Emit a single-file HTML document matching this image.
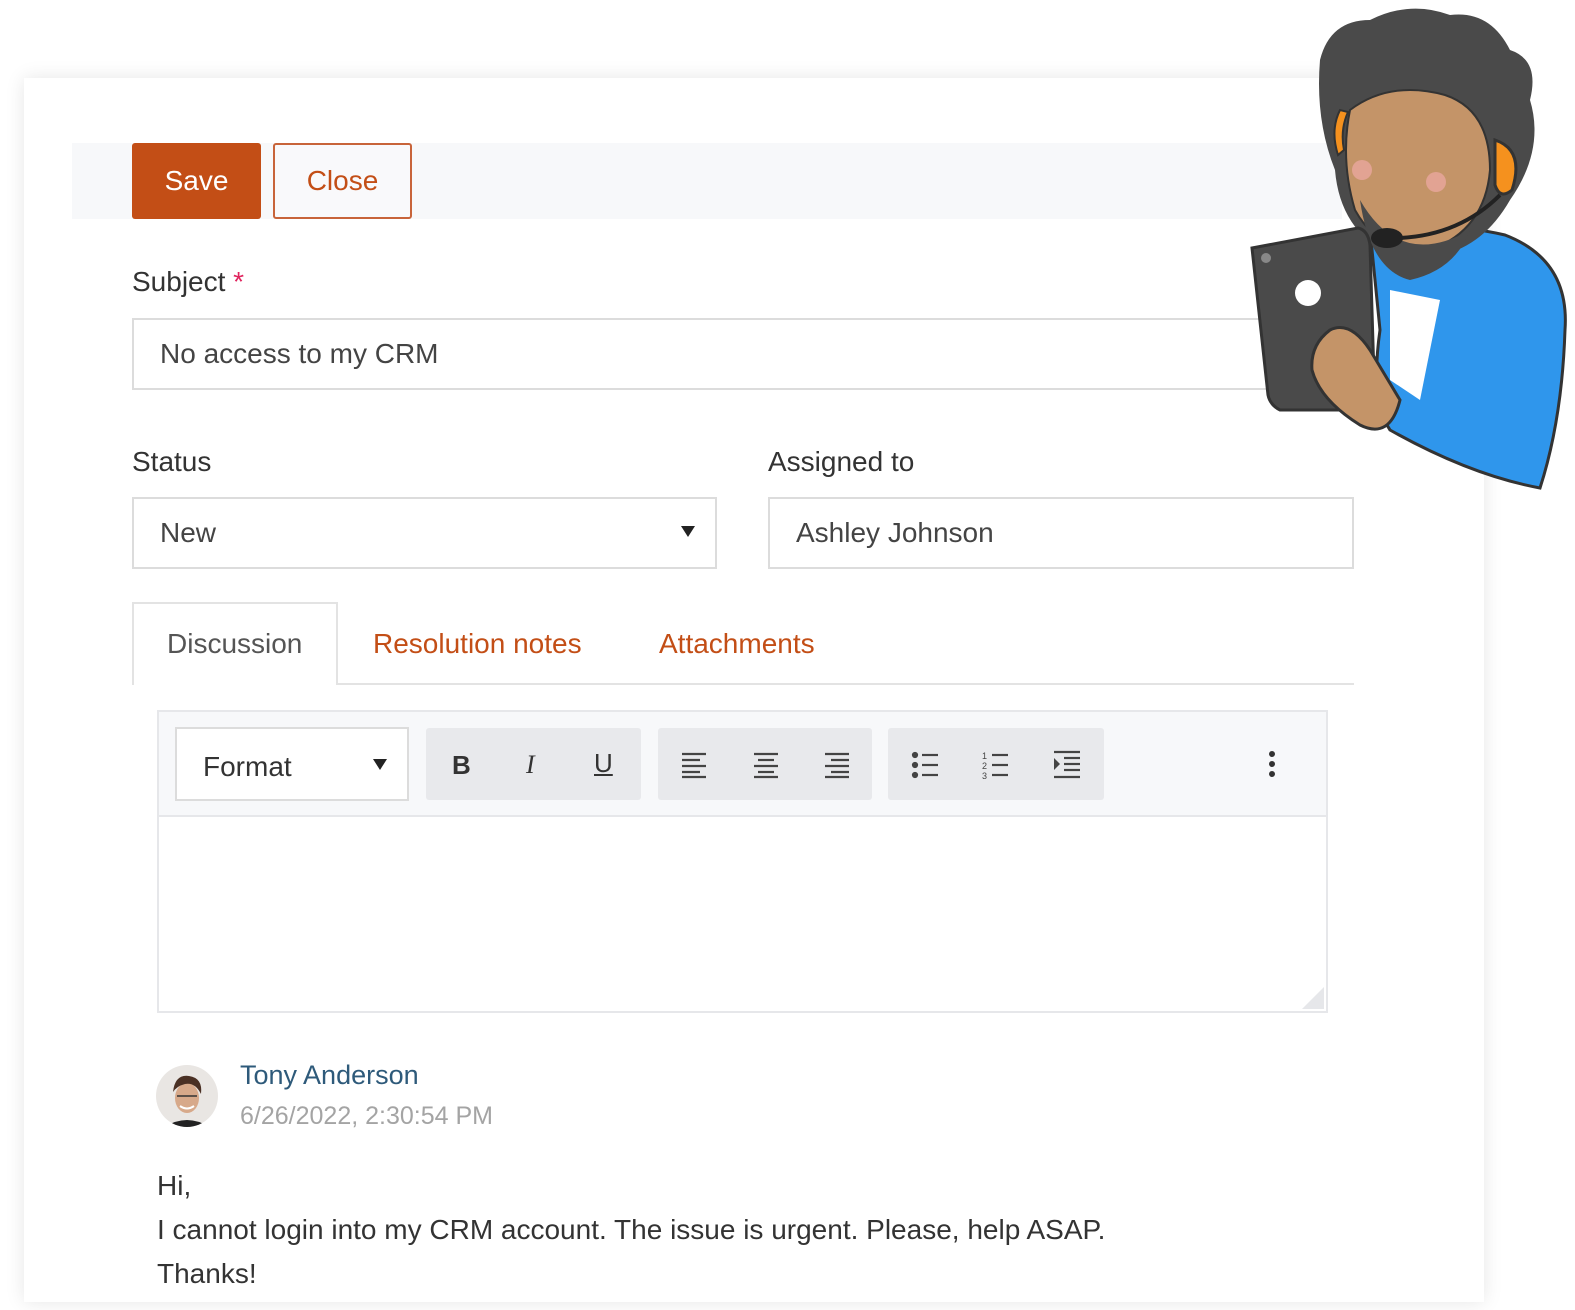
<!DOCTYPE html>
<html><head><meta charset="utf-8">
<style>
*{box-sizing:border-box;margin:0;padding:0}
html,body{width:1575px;height:1310px;overflow:hidden}
body{background:#fff;position:relative;font-family:"Liberation Sans",sans-serif;color:#333}
.card{position:absolute;left:24px;top:78px;width:1460px;height:1224px;background:#fff;box-shadow:0 0 18px rgba(0,0,0,0.10)}
.band{position:absolute;left:72px;top:143px;width:1270px;height:76px;background:#f7f8fa}
.btn{position:absolute;top:143px;height:76px;font-size:28px;display:flex;align-items:center;justify-content:center;border-radius:3px}
.save{left:132px;width:129px;background:#c34e16;color:#fff}
.close{left:273px;width:139px;border:2px solid #c8643a;color:#c34e16;background:#f9f9fb}
.lbl{position:absolute;font-size:28px;color:#333}
.inp{position:absolute;height:72px;border:2px solid #dcdcdc;font-size:28px;color:#444;padding-left:26px;display:flex;align-items:center;background:#fff}
.tab{position:absolute;font-size:28px;top:628px}
.tb{position:absolute;background:#e8e9ec;border-radius:3px;top:728px;height:72px}
</style></head><body>
<div class="card"></div>
<div class="band"></div>
<div class="btn save">Save</div>
<div class="btn close">Close</div>

<div class="lbl" style="left:132px;top:266px">Subject <span style="color:#e0245e">*</span></div>
<div class="inp" style="left:132px;top:318px;width:1222px">No access to my CRM</div>

<div class="lbl" style="left:132px;top:446px">Status</div>
<div class="inp" style="left:132px;top:497px;width:585px">New</div>
<div style="position:absolute;left:681px;top:526px;width:0;height:0;border-left:7px solid transparent;border-right:7px solid transparent;border-top:11px solid #222"></div>
<div class="lbl" style="left:768px;top:446px">Assigned to</div>
<div class="inp" style="left:768px;top:497px;width:586px">Ashley Johnson</div>

<div style="position:absolute;left:132px;top:683px;width:1222px;height:2px;background:#e3e3e3"></div>
<div style="position:absolute;left:132px;top:602px;width:206px;height:83px;border:2px solid #e3e3e3;border-bottom:none;background:#fff"></div>
<div class="tab" style="left:167px;color:#555">Discussion</div>
<div class="tab" style="left:373px;color:#c34e16">Resolution notes</div>
<div class="tab" style="left:659px;color:#c34e16">Attachments</div>

<div style="position:absolute;left:157px;top:710px;width:1171px;height:303px;border:2px solid #e6e7ea;background:#fff"></div>
<div style="position:absolute;left:159px;top:712px;width:1167px;height:105px;background:#f7f8fa;border-bottom:2px solid #e6e7ea"></div>
<div style="position:absolute;left:175px;top:727px;width:234px;height:74px;border:2px solid #dcdcdc;background:#fff;font-size:28px;padding:22px 0 0 26px">Format</div>
<div style="position:absolute;left:373px;top:759px;border-left:7px solid transparent;border-right:7px solid transparent;border-top:11px solid #222"></div>
<div class="tb" style="left:426px;width:215px"></div>
<div class="tb" style="left:658px;width:214px"></div>
<div class="tb" style="left:888px;width:216px"></div>
<div style="position:absolute;left:452px;top:750px;font-size:26px;font-weight:bold;color:#333">B</div>
<div style="position:absolute;left:526px;top:750px;font-size:26px;font-style:italic;font-family:'Liberation Serif',serif;color:#333">I</div>
<div style="position:absolute;left:594px;top:748px;font-size:26px;text-decoration:underline;color:#333">U</div>
<svg style="position:absolute;left:680px;top:750px" width="420" height="30" stroke="#444" stroke-width="2.2">
<g><line x1="2" y1="4" x2="26" y2="4"/><line x1="2" y1="10" x2="20" y2="10"/><line x1="2" y1="16" x2="26" y2="16"/><line x1="2" y1="22" x2="20" y2="22"/><line x1="2" y1="27" x2="26" y2="27"/></g>
<g transform="translate(72,0)"><line x1="2" y1="4" x2="26" y2="4"/><line x1="6" y1="10" x2="22" y2="10"/><line x1="2" y1="16" x2="26" y2="16"/><line x1="6" y1="22" x2="22" y2="22"/><line x1="2" y1="27" x2="26" y2="27"/></g>
<g transform="translate(143,0)"><line x1="2" y1="4" x2="26" y2="4"/><line x1="8" y1="10" x2="26" y2="10"/><line x1="2" y1="16" x2="26" y2="16"/><line x1="8" y1="22" x2="26" y2="22"/><line x1="2" y1="27" x2="26" y2="27"/></g>
<g transform="translate(232,0)"><circle cx="3" cy="5" r="2" fill="#444"/><circle cx="3" cy="15" r="2" fill="#444"/><circle cx="3" cy="25" r="2" fill="#444"/><line x1="10" y1="5" x2="26" y2="5"/><line x1="10" y1="15" x2="26" y2="15"/><line x1="10" y1="25" x2="26" y2="25"/></g>
<g transform="translate(302,0)"><text x="0" y="9" font-size="9" fill="#444" stroke="none">1</text><text x="0" y="19" font-size="9" fill="#444" stroke="none">2</text><text x="0" y="29" font-size="9" fill="#444" stroke="none">3</text><line x1="10" y1="5" x2="26" y2="5"/><line x1="10" y1="15" x2="26" y2="15"/><line x1="10" y1="25" x2="26" y2="25"/></g>
<g transform="translate(372,0)"><line x1="2" y1="2" x2="28" y2="2"/><line x1="12" y1="8" x2="28" y2="8"/><line x1="12" y1="14" x2="28" y2="14"/><line x1="12" y1="20" x2="28" y2="20"/><line x1="2" y1="27" x2="28" y2="27"/><polygon points="2,8 8,14 2,20" fill="#444" stroke="none"/></g>
</svg>
<svg style="position:absolute;left:1266px;top:750px" width="12" height="30" fill="#333"><circle cx="6" cy="4" r="3"/><circle cx="6" cy="14" r="3"/><circle cx="6" cy="24" r="3"/></svg>
<svg style="position:absolute;left:1300px;top:985px" width="26" height="26"><polygon points="24,2 24,24 2,24" fill="#e6e7ea"/></svg>

<svg style="position:absolute;left:155px;top:1064px" width="64" height="64">
<circle cx="32" cy="32" r="31" fill="#e9e6e3"/>
<clipPath id="c"><circle cx="32" cy="32" r="31"/></clipPath>
<g clip-path="url(#c)"><path d="M8 64 Q32 48 56 64Z" fill="#222"/><ellipse cx="32" cy="34" rx="12" ry="15" fill="#d7a98a"/><path d="M18 28 Q20 10 34 12 Q48 14 46 30 Q40 18 30 20 Q22 22 18 28Z" fill="#4a3024"/><line x1="22" y1="32" x2="42" y2="32" stroke="#333" stroke-width="1.5"/><path d="M25 42 Q32 47 39 42" stroke="#fff" stroke-width="2" fill="none"/></g>
</svg>
<div style="position:absolute;left:240px;top:1060px;font-size:27px;color:#2e5a7a">Tony Anderson</div>
<div style="position:absolute;left:240px;top:1102px;font-size:25px;color:#a4a4a4">6/26/2022, 2:30:54 PM</div>
<div style="position:absolute;left:157px;top:1164px;font-size:28px;line-height:44px;color:#333">Hi,<br>I cannot login into my CRM account. The issue is urgent. Please, help ASAP.<br>Thanks!</div>

<svg style="position:absolute;left:1240px;top:0" width="335" height="495" viewBox="0 0 335 495">
<path d="M130 230 Q200 220 265 235 Q330 260 325 330 Q322 420 300 488 Q230 475 150 430 Q130 400 140 330Z" fill="#2f96ec" stroke="#333" stroke-width="3"/>
<path d="M150 290 L200 300 L180 400 L150 380Z" fill="#fff"/>
<path d="M80 60 Q90 20 130 20 Q170 0 210 15 Q250 10 270 50 Q300 60 290 100 Q305 150 270 200 Q230 270 150 255 Q100 230 95 170 Q75 120 80 60Z" fill="#4a4a4a"/>
<path d="M110 110 Q150 80 205 95 Q250 110 250 170 Q245 230 190 250 Q140 255 115 210 Q100 160 110 110Z" fill="#c49468" stroke="#333" stroke-width="2"/>
<path d="M120 200 Q160 270 230 230 Q215 270 170 280 Q130 270 120 200Z" fill="#4a4a4a"/>
<circle cx="122" cy="170" r="10" fill="#e2a393"/><circle cx="196" cy="182" r="10" fill="#e2a393"/>
<path d="M255 140 Q285 150 272 190 Q260 200 255 185Z" fill="#f5911e" stroke="#333" stroke-width="3"/>
<path d="M100 110 Q90 130 98 155 L104 150 Q100 130 108 112Z" fill="#f5911e" stroke="#333" stroke-width="2"/>
<path d="M260 195 Q220 235 160 238" stroke="#222" stroke-width="4" fill="none"/>
<ellipse cx="147" cy="238" rx="16" ry="10" fill="#222"/>
<path d="M12 248 L118 228 Q128 230 130 245 L135 410 L40 410 Q30 405 28 395Z" fill="#4a4a4a" stroke="#333" stroke-width="3"/>
<circle cx="68" cy="293" r="13" fill="#fff"/><circle cx="26" cy="258" r="5" fill="#888"/>
<path d="M90 330 Q110 320 130 350 L160 400 Q150 440 120 425 Q80 400 72 370 Q70 345 90 330Z" fill="#c49468" stroke="#333" stroke-width="3"/>
</svg>
</body></html>
